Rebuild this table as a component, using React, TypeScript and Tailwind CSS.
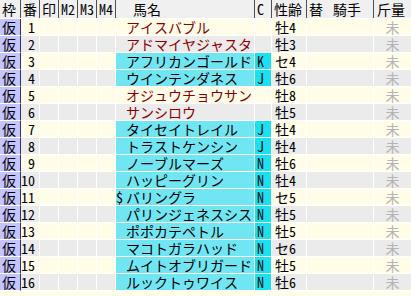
const rows: { name: string; c: string; sa: string; mark?: string }[] = [
  { name: 'アイスバブル', c: '', sa: '牡4' },
  { name: 'アドマイヤジャスタ', c: '', sa: '牡3' },
  { name: 'アフリカンゴールド', c: 'K', sa: 'セ4' },
  { name: 'ウインテンダネス', c: 'J', sa: '牡6' },
  { name: 'オジュウチョウサン', c: '', sa: '牡8' },
  { name: 'サンシロウ', c: '', sa: '牡5' },
  { name: 'タイセイトレイル', c: 'J', sa: '牡4' },
  { name: 'トラストケンシン', c: 'J', sa: '牡4' },
  { name: 'ノーブルマーズ', c: 'N', sa: '牡6' },
  { name: 'ハッピーグリン', c: 'N', sa: '牡4' },
  { name: 'バリングラ', c: 'N', sa: 'セ5', mark: '$' },
  { name: 'パリンジェネスシス', c: 'N', sa: '牡5' },
  { name: 'ポポカテペトル', c: 'N', sa: '牡5' },
  { name: 'マコトガラハッド', c: 'N', sa: 'セ6' },
  { name: 'ムイトオブリガード', c: 'N', sa: '牡5' },
  { name: 'ルックトゥワイス', c: 'N', sa: '牡6' },
];

const cols = 'grid grid-cols-[21px_19px_19px_19px_19px_19px_139px_17px_35px_67px_37px]';

function Head({ children, className = '' }: { children?: React.ReactNode; className?: string }) {
  return (
    <div className={`h-[18px] flex items-center border-r border-[#505050] whitespace-nowrap ${className}`}>
      {children}
    </div>
  );
}

export default function App() {
  return (
    <div
      className="w-[411px] h-[296px] bg-[#fffde8] overflow-hidden text-[14px] leading-[15px] text-black"
      style={{ fontFamily: '"Noto Sans Mono CJK JP", "Noto Sans CJK JP", sans-serif' }}
    >
      {/* ---- header ---- */}
      <div className={`${cols} bg-[#f0f0f0] border-b border-white`}>
        <Head className="pl-[2px]">枠</Head>
        <Head className="pl-[2px]">番</Head>
        <Head className="pl-[2px]">印</Head>
        <Head className="pl-[2px]">M2</Head>
        <Head className="pl-[2px]">M3</Head>
        <Head className="pl-[2px]">M4</Head>
        <Head className="pl-[17px]">馬名</Head>
        <Head className="pl-[2px]">C</Head>
        <Head className="pl-[2px]">性齢</Head>
        <Head className="pl-[2px]">
          替<span className="ml-[10px]">騎手</span>
        </Head>
        <Head className="pl-[3px] border-r-0">斤量</Head>
      </div>

      {/* ---- rows ---- */}
      {rows.map((r, i) => {
        const bg = i % 2 === 0 ? 'bg-[#fffde8]' : 'bg-[#ebebeb]';
        const cyan = r.c !== '';
        return (
          <div key={i} className={`${cols} h-[17px]`}>
            <div className="bg-[#c4c4ff] border-r border-[#30306a] border-b border-b-white flex items-center pl-[2px]">
              仮
            </div>
            <div className={`${bg} border-r border-b border-white flex items-center justify-end pr-[4px]`}>
              {i + 1}
            </div>
            <div className={`${bg} border-r border-b border-white`} />
            <div className={`${bg} border-r border-b border-white`} />
            <div className={`${bg} border-r border-b border-white`} />
            <div className={`${bg} border-r border-b border-white`} />
            <div
              className={`${cyan ? 'bg-[#70e6f2] text-black' : `${bg} text-[#8b0000]`} border-r border-b border-white flex items-center whitespace-nowrap`}
            >
              <span className="w-[10px] shrink-0 text-black">{r.mark ?? ''}</span>
              {r.name}
            </div>
            <div
              className={`${cyan ? 'bg-[#16e2f2]' : bg} border-r border-b border-white flex items-center pl-[2px]`}
            >
              {r.c}
            </div>
            <div className={`${bg} border-r border-b border-white flex items-center pl-[3px]`}>
              {r.sa}
            </div>
            <div className={`${bg} border-r border-b border-white`} />
            <div className={`${bg} border-b border-white flex items-center justify-center text-[#b4b4b4]`}>
              未
            </div>
          </div>
        );
      })}
    </div>
  );
}
